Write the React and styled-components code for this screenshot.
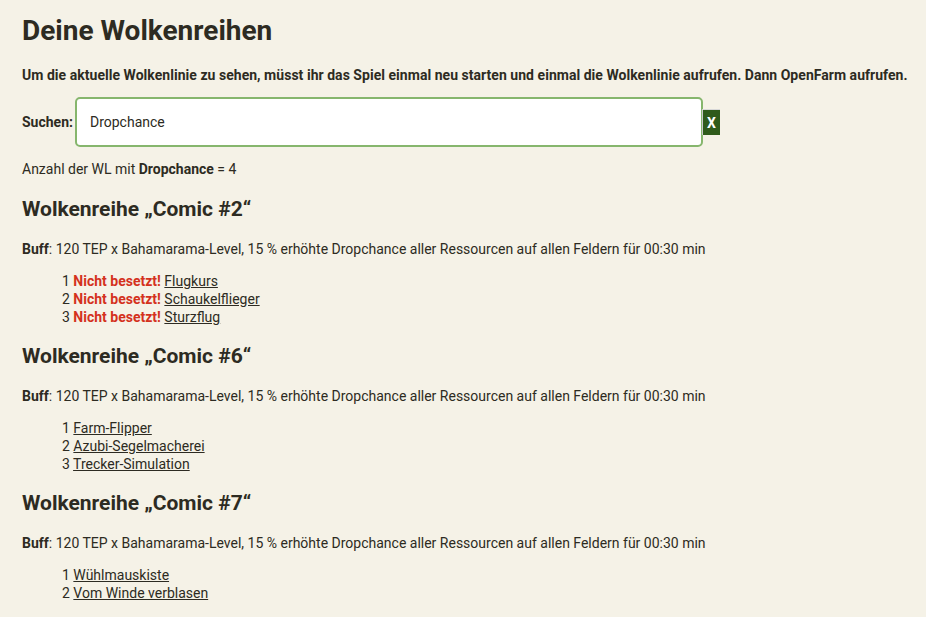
import React from "react";
import styled, { createGlobalStyle } from "styled-components";

const GlobalStyle = createGlobalStyle`
  html, body {
    margin: 0;
    padding: 0;
    background: #f5f2e7;
  }
  body {
    font-family: Roboto, "Noto Sans", Arial, sans-serif;
    color: #2d2b22;
    font-size: 14px;
  }
`;

const Page = styled.main`
  padding: 14px 8px 20px 22px;
`;

const Title = styled.h1`
  font-size: 28px;
  font-weight: 700;
  margin: 0 0 18px 0;
  line-height: 34px;
`;

const Intro = styled.p`
  font-size: 14px;
  font-weight: 700;
  margin: 0 0 13px 0;
  line-height: 18px;
  white-space: nowrap;
  letter-spacing: 0.0025em;
`;

const SearchRow = styled.div`
  display: flex;
  align-items: center;
  gap: 2px;
`;

const Label = styled.label`
  font-weight: 700;
  font-size: 14px;
`;

const SearchInput = styled.input`
  box-sizing: border-box;
  width: 628px;
  height: 50px;
  border: 2px solid #86b66d;
  border-radius: 5px;
  background: #fff;
  padding: 0 13px;
  font-family: inherit;
  font-size: 14px;
  color: #2d2b22;
  outline: none;
`;

const ClearButton = styled.button`
  box-sizing: border-box;
  width: 18px;
  height: 26px;
  margin-left: -3px;
  padding: 0;
  border: none;
  border-left: 1px solid #c9c9c9;
  border-top: 1px solid #d8d8d8;
  background: #2f5b1b;
  color: #fff;
  font-family: inherit;
  font-weight: 700;
  font-size: 14px;
  line-height: 24px;
  text-align: center;
`;

const Count = styled.p`
  margin: 13px 0 0 0;
  line-height: 18px;
`;

const Section = styled.section`
  margin-top: 18px;
  & + & {
    margin-top: 17px;
  }
`;

const Heading = styled.h2`
  font-size: 21px;
  font-weight: 700;
  margin: 0 0 18px 0;
  line-height: 26px;
`;

const Buff = styled.p`
  margin: 0 0 14px 0;
  line-height: 18px;
`;

const List = styled.ol`
  list-style: none;
  margin: 0;
  padding: 0 0 0 40px;
`;

const Item = styled.li`
  line-height: 18px;
`;

const Missing = styled.strong`
  color: #d4311d;
  font-weight: 700;
`;

const ItemLink = styled.a`
  color: #2d2b22;
  text-decoration: underline;
`;

const buffText =
  "120 TEP x Bahamarama-Level, 15 % erhöhte Dropchance aller Ressourcen auf allen Feldern für 00:30 min";

const rows = [
  {
    name: "Comic #2",
    items: [
      { t: "Flugkurs", missing: true },
      { t: "Schaukelflieger", missing: true },
      { t: "Sturzflug", missing: true },
    ],
  },
  {
    name: "Comic #6",
    items: [{ t: "Farm-Flipper" }, { t: "Azubi-Segelmacherei" }, { t: "Trecker-Simulation" }],
  },
  {
    name: "Comic #7",
    items: [{ t: "Wühlmauskiste" }, { t: "Vom Winde verblasen" }],
  },
];

export default function App() {
  return (
    <>
      <GlobalStyle />
      <Page>
        <Title>Deine Wolkenreihen</Title>
        <Intro>
          Um die aktuelle Wolkenlinie zu sehen, müsst ihr das Spiel einmal neu starten und einmal die
          Wolkenlinie aufrufen. Dann OpenFarm aufrufen.
        </Intro>
        <SearchRow>
          <Label htmlFor="q">Suchen:</Label>
          <SearchInput id="q" defaultValue="Dropchance" />
          <ClearButton>X</ClearButton>
        </SearchRow>
        <Count>
          Anzahl der WL mit <strong>Dropchance</strong> = 4
        </Count>
        {rows.map((r) => (
          <Section key={r.name}>
            <Heading>Wolkenreihe „{r.name}“</Heading>
            <Buff>
              <strong>Buff</strong>: {buffText}
            </Buff>
            <List>
              {r.items.map((it, i) => (
                <Item key={it.t}>
                  {i + 1} {it.missing && <Missing>Nicht besetzt!</Missing>}
                  {it.missing && " "}
                  <ItemLink href="#">{it.t}</ItemLink>
                </Item>
              ))}
            </List>
          </Section>
        ))}
      </Page>
    </>
  );
}
